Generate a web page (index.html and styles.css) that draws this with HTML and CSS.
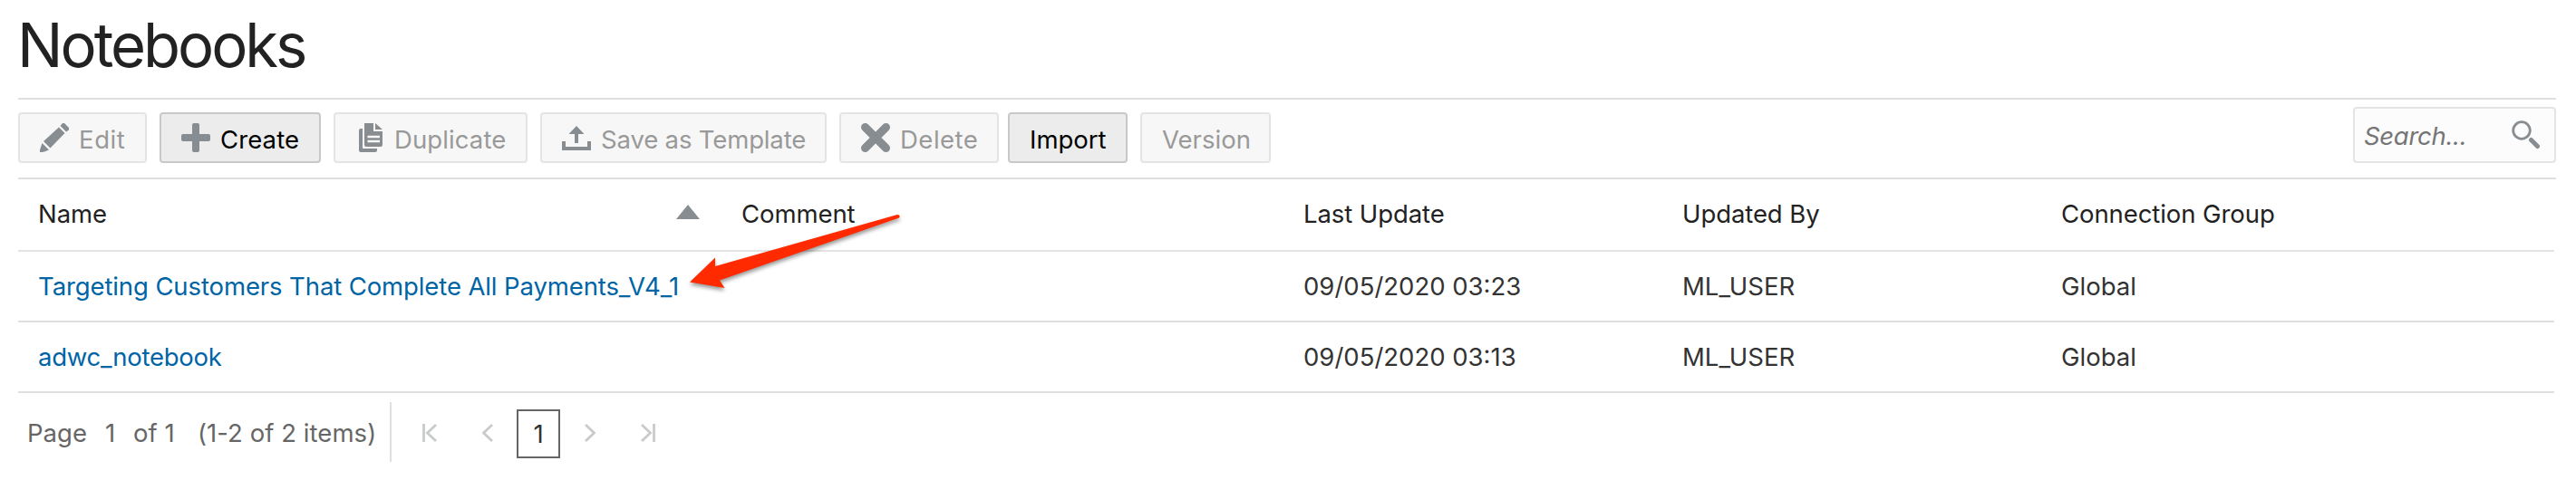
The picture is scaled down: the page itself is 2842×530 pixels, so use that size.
FILE: index.html
```html
<!DOCTYPE html>
<html lang="en">
<head>
<meta charset="utf-8">
<title>Notebooks</title>
<link rel="stylesheet" href="styles.css">
</head>
<body>
<main class="page">
  <h1 class="title">Notebooks</h1>
  <div class="toolbar">
    <button class="btn btn-edit" disabled>
      <svg class="icon" viewBox="0 0 32 32"><path d="M4 20 21 4.500 27.500 11 11.500 27.500Z M2.500 22 10 29.500 5 31.500 2.500 32H0V29.500Z M22.500 3 25 0H27L32 5V7.500L29 9.500Z"/></svg><span>Edit</span></button>
    <button class="btn btn-create">
      <svg class="icon" viewBox="0 0 32 32"><path d="M14 0h4q2 0 2 2v10h10q2 0 2 2v4q0 2-2 2H20v10q0 2-2 2h-4q-2 0-2-2V20H2q-2 0-2-2v-4q0-2 2-2h10V2q0-2 2-2z"/></svg><span>Create</span></button>
    <button class="btn btn-duplicate" disabled>
      <svg class="icon" viewBox="0 0 32 32"><path d="M10 0H20V9H30V24Q30 26 28 26H12Q10 26 10 24Z M22 0 30 7H22Z M4 8Q4 6 6 6H8V28H24V30Q24 32 22 32H6Q4 32 4 30Z"/><path class="cut" d="M13.500 15H27M13.500 20H27"/></svg><span>Duplicate</span></button>
    <button class="btn btn-save" disabled>
      <svg class="icon" viewBox="0 0 32 32"><path d="M16 3 24.500 12H18V22H14V12H7.500Z M0 20H4V26H28V20H32V30H0Z"/></svg><span>Save as Template</span></button>
    <button class="btn btn-delete" disabled>
      <svg class="icon" viewBox="0 0 32 32"><path class="cross" d="M4.500 4.500 27.500 27.500M27.500 4.500 4.500 27.500"/></svg><span>Delete</span></button>
    <button class="btn btn-import"><span>Import</span></button>
    <button class="btn btn-version" disabled><span>Version</span></button>
    <label class="search"><span class="placeholder">Search...</span>
      <svg class="search-icon" viewBox="0 0 34 34"><circle cx="12" cy="12" r="9.300"/><path d="M22.500 22.500 29.500 29.500"/></svg></label>
  </div>
  <section class="table">
    <div class="row head">
      <div class="cell name"><span>Name</span><svg class="sort" viewBox="0 0 26 16"><path d="M13 0 26 16H0Z"/></svg></div>
      <div class="cell">Comment</div>
      <div class="cell">Last Update</div>
      <div class="cell">Updated By</div>
      <div class="cell">Connection Group</div>
    </div>
    <div class="row">
      <div class="cell link">Targeting Customers That Complete All Payments_V4_1</div>
      <div class="cell"></div>
      <div class="cell">09/05/2020 03:23</div>
      <div class="cell">ML_USER</div>
      <div class="cell">Global</div>
    </div>
    <div class="row">
      <div class="cell link short">adwc_notebook</div>
      <div class="cell"></div>
      <div class="cell">09/05/2020 03:13</div>
      <div class="cell">ML_USER</div>
      <div class="cell">Global</div>
    </div>
  </section>
  <footer class="pager">
    <div class="summary"><span class="p-label">Page</span><span class="p-num">1</span><span class="p-of">of 1</span><span class="p-items">(1-2 of 2 items)</span></div>
    <nav class="pages">
      <svg class="nav first" viewBox="0 0 16 20"><path d="M1.500 0V20M15 1 5.500 10 15 19"/></svg>
      <svg class="nav prev" viewBox="0 0 12 20"><path d="M11 1 1.500 10 11 19"/></svg>
      <span class="current">1</span>
      <svg class="nav next" viewBox="0 0 12 20"><path d="M1 1 10.500 10 1 19"/></svg>
      <svg class="nav last" viewBox="0 0 16 20"><path d="M14.500 0V20M1 1 10.500 10 1 19"/></svg>
    </nav>
  </footer>
  <svg class="arrow" viewBox="0 0 250 100"><path d="M11 81.500 39 54.500V64L240 7Q244 7 242 10.500L44 79.500 49.500 88Z"/></svg>
</main>
</body>
</html>
```
FILE: styles.css
```css
* { box-sizing: border-box; }
body { margin: 0; background: #fff; color: #333; font-family: Inter, "Liberation Sans", sans-serif; font-size: 27.5px; line-height: 34px; }
.page { position: relative; width: 2842px; height: 530px; padding: 0 22px 0 20px; overflow: hidden; }
.title { margin: 0; height: 110px; padding-top: 10px; border-bottom: 2px solid #dfdfdf; color: #222; font-size: 67px; font-weight: 400; line-height: 80px; letter-spacing: -3px; text-indent: -1px; }
.toolbar { display: flex; align-items: flex-start; height: 88px; padding-top: 14px; border-bottom: 2px solid #dfdfdf; }
.btn { display: flex; align-items: center; gap: 11px; height: 56px; margin: 0 14px 0 0; padding: 0 0 0 22px; border: 2px solid #c8c8c8; border-radius: 4px; background: #ececec; color: #000; font: inherit; white-space: nowrap; }
.btn span { padding-top: 4px; }
.btn:disabled { border-color: #e4e4e4; background: #f7f7f7; color: #999; }
.btn-edit { width: 142px; letter-spacing: .6px; }
.btn-create { width: 178px; letter-spacing: .1px; }
.btn-duplicate { width: 214px; letter-spacing: .1px; }
.btn-save { width: 316px; letter-spacing: -.15px; }
.btn-delete { width: 176px; margin-right: 10px; letter-spacing: .5px; }
.btn-import { width: 132px; }
.btn-version { width: 144px; }
.icon { flex: none; width: 32px; height: 32px; fill: #878d91; }
.cut { stroke: #f7f7f7; stroke-width: 2.5; }
.cross { stroke: #878d91; stroke-width: 9; stroke-linecap: round; }
.search { display: flex; align-items: center; justify-content: space-between; width: 224px; height: 62px; margin: -6px 0 0 auto; padding: 0 14px 0 10px; border: 2px solid #e4e4e4; border-radius: 4px; background: #fcfcfc; color: #757575; font-style: italic; }
.placeholder { padding-top: 2px; letter-spacing: -.3px; }
.search-icon { width: 34px; height: 34px; fill: none; stroke: #878d91; }
.search-icon circle { stroke-width: 2.8; }
.search-icon path { stroke-width: 5; stroke-linecap: round; }
.table { width: 2798px; }
.row { display: grid; grid-template-columns: 776px 620px 418px 418px 1fr; height: 78px; border-bottom: 2px solid #dfdfdf; }
.head { height: 80px; padding-bottom: 2px; border-bottom-color: #e4e4e4; color: #222; letter-spacing: -.08px; }
.cell { display: flex; align-items: center; padding-left: 22px; white-space: nowrap; }
.name { justify-content: space-between; padding-right: 24px; }
.sort { width: 26px; height: 16px; margin-bottom: 4px; fill: #878d91; }
.link { color: #0064a5; letter-spacing: -.11px; }
.short { letter-spacing: -.25px; }
.pager { display: flex; height: 96px; padding-top: 10px; }
.summary { display: flex; align-items: center; width: 412px; height: 66px; padding: 2px 0 0 10px; border-right: 2px solid #dfdfdf; color: #666; white-space: nowrap; letter-spacing: .05px; }
.p-label { width: 86px; }
.p-num { width: 31px; }
.p-of { width: 71px; }
.pages { display: flex; align-items: center; height: 66px; }
.nav { height: 20px; margin-top: 2px; fill: none; stroke: #c9cacb; stroke-width: 2.8; }
.first { width: 16px; margin-left: 34px; }
.prev { width: 12px; margin-left: 50px; }
.current { display: flex; align-items: center; justify-content: center; width: 48px; height: 54px; margin: 4px 27px 0 26px; border: 2px solid #666; color: #333; }
.next { width: 12px; }
.last { width: 16px; margin-left: 50px; }
.arrow { position: absolute; left: 750px; top: 230px; width: 250px; height: 100px; fill: #ff2a00; filter: drop-shadow(0 3px 2px rgba(0,0,0,.4)); }
```
